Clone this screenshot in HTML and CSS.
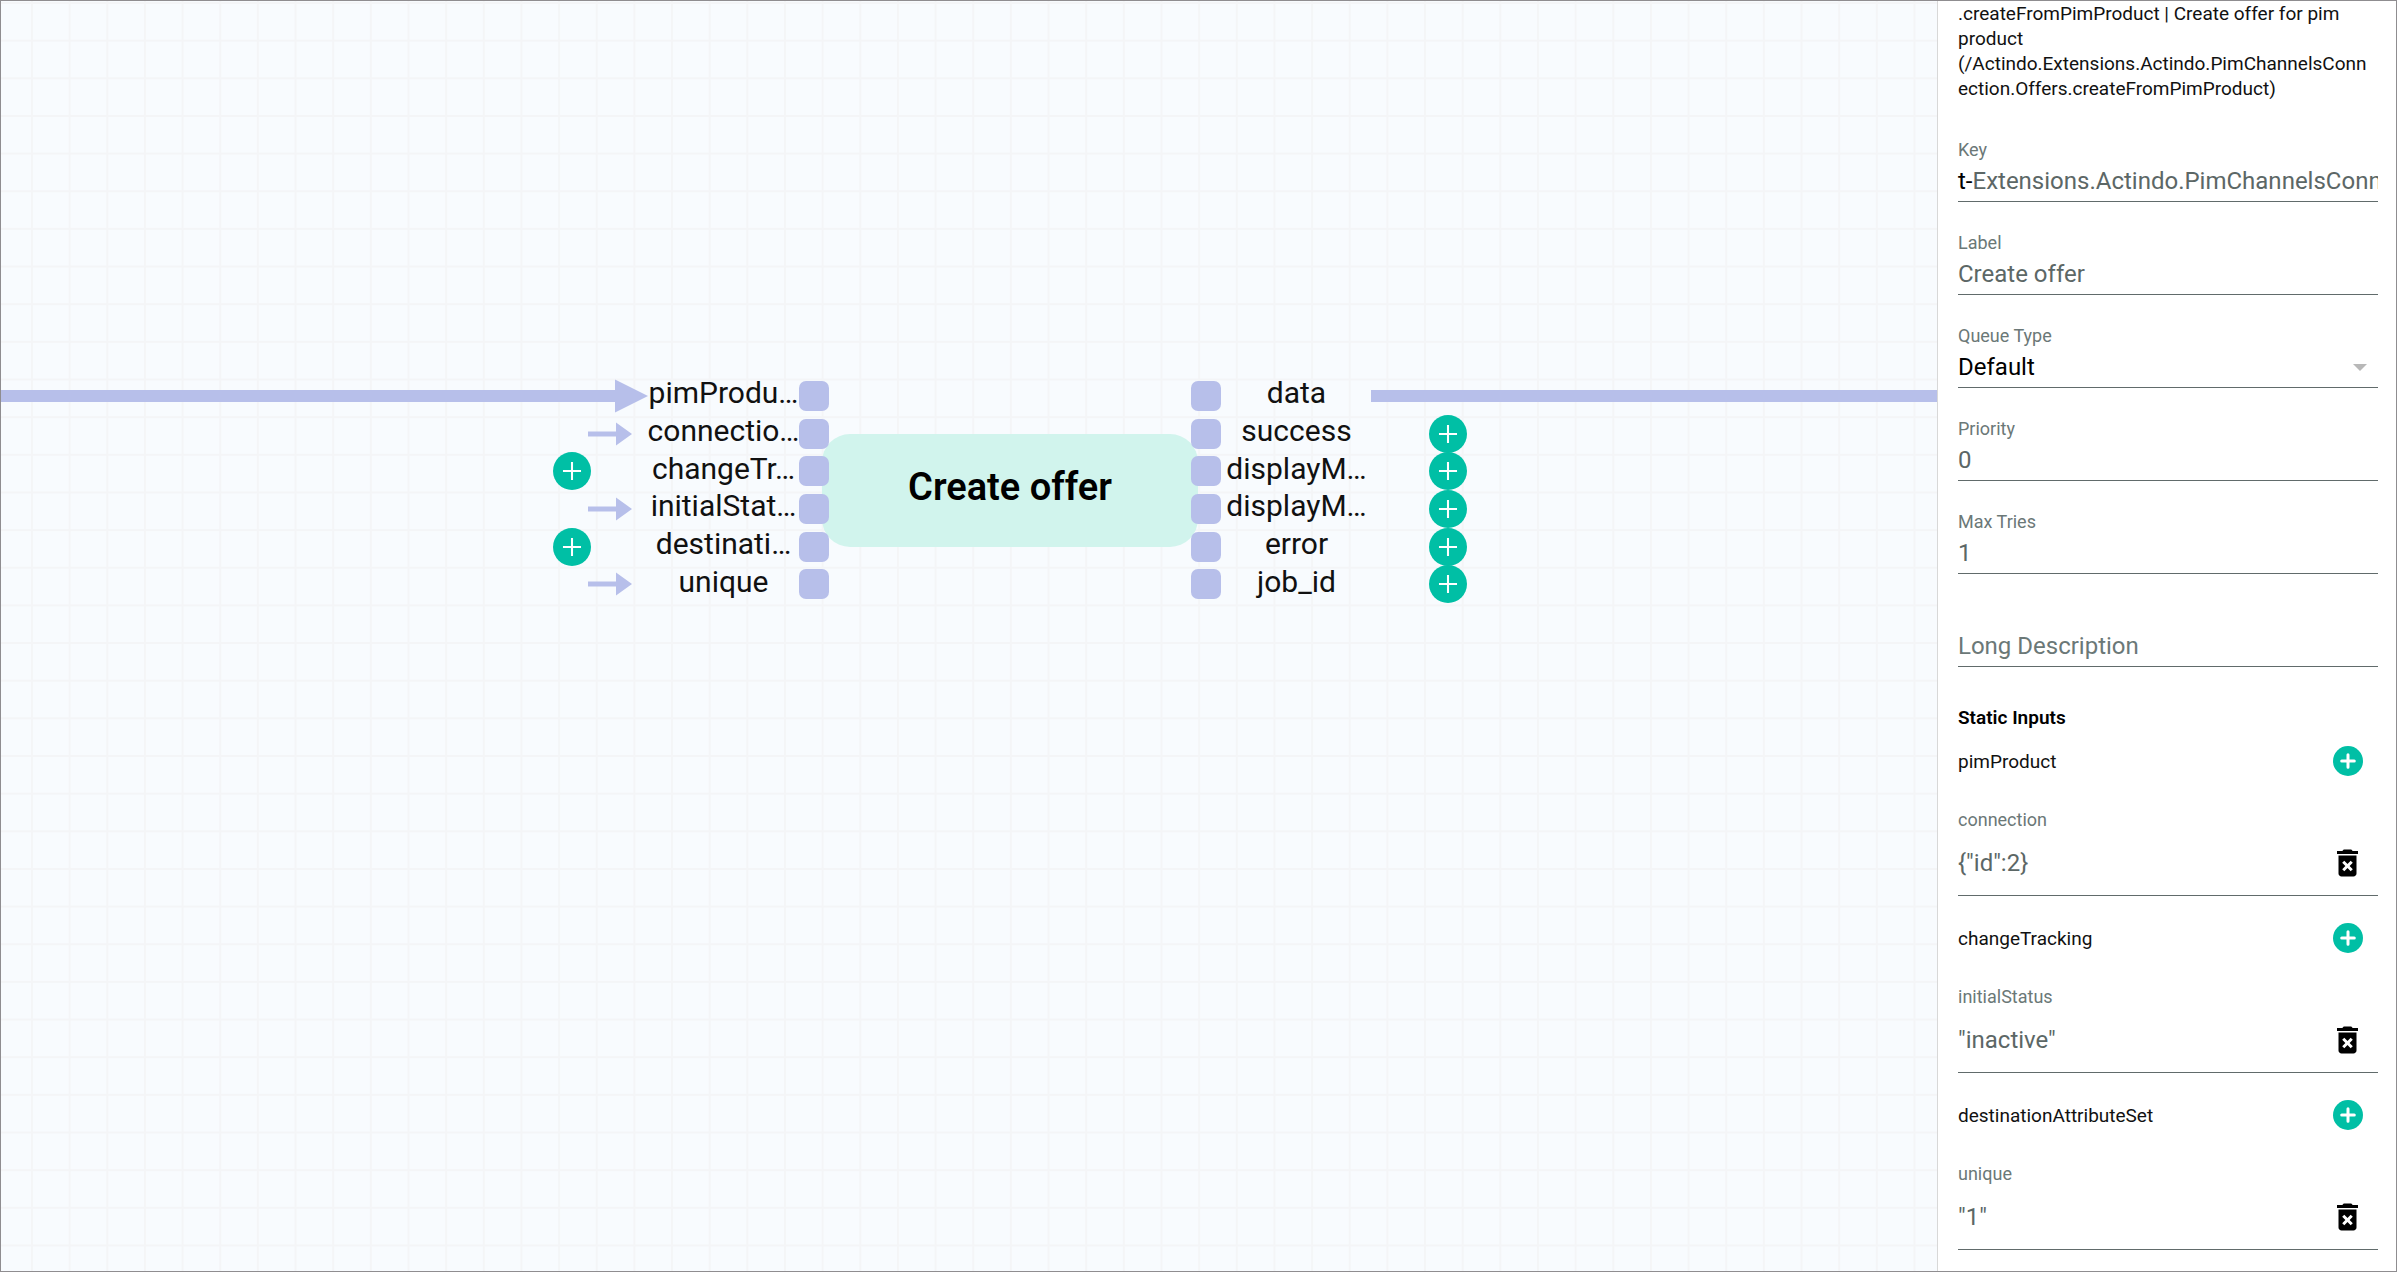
FILE: index.html
```html
<!DOCTYPE html>
<html lang="en">
<head>
<meta charset="utf-8">
<meta name="viewport" content="width=device-width, initial-scale=1">
<title>Create offer – workflow editor</title>
<link rel="stylesheet" href="styles.css">
</head>
<body>
<svg class="sprite" aria-hidden="true">
  <symbol id="plus" viewBox="0 0 24 24"><circle cx="12" cy="12" r="12" fill="#00bfa5"/><path d="M12 6.300v11.400M6.300 12h11.400" stroke="#fff" stroke-width="1.300"/></symbol>
  <symbol id="add" viewBox="2 2 20 20"><circle cx="12" cy="12" r="10" fill="#00bfa5"/><path d="M12 7.800v8.400M7.800 12h8.400" stroke="#fff" stroke-width="2" stroke-linecap="round"/></symbol>
  <symbol id="trash" viewBox="5 3 14 18"><path fill-rule="evenodd" d="M6 19c0 1.100.9 2 2 2h8c1.100 0 2-.9 2-2V7H6v12zm2.460-7.120 1.410-1.410L12 12.590l2.120-2.120 1.410 1.410L13.410 14l2.120 2.120-1.410 1.410L12 15.410l-2.120 2.120-1.410-1.410L10.590 14l-2.130-2.120zM15.500 4l-1-1h-5l-1 1H5v2h14V4z"/></symbol>
  <symbol id="arrow" viewBox="0 0 44 24"><path d="M0 9.500h28V.5L44 12 28 23.500v-9H0z" fill="#b7bfea"/></symbol>
  <symbol id="head" viewBox="0 0 33 34"><path d="M0 .5 33 17 0 33.500z" fill="#b7bfea"/></symbol>
</svg>
<div class="app">
  <main class="canvas">
    <svg class="grid" aria-hidden="true">
      <defs>
        <pattern id="cells" width="20" height="20" patternUnits="userSpaceOnUse" patternTransform="translate(30 1) scale(1.8825)">
          <path d="M0 0H20M0 0V20" stroke="#f4f5f7" stroke-width="2" fill="none"/>
        </pattern>
      </defs>
      <rect width="100%" height="100%" fill="url(#cells)"/>
    </svg>
    <div class="edge edge-in"><svg class="head"><use href="#head"/></svg></div>
    <div class="edge edge-out"></div>
    <section class="node" aria-label="Create offer">
      <ul class="links links-in">
        <li></li>
        <li><svg class="arrow"><use href="#arrow"/></svg></li>
        <li><button class="plus" aria-label="Connect changeTracking"><svg><use href="#plus"/></svg></button></li>
        <li><svg class="arrow"><use href="#arrow"/></svg></li>
        <li><button class="plus" aria-label="Connect destinationAttributeSet"><svg><use href="#plus"/></svg></button></li>
        <li><svg class="arrow"><use href="#arrow"/></svg></li>
      </ul>
      <ul class="labels">
        <li>pimProdu…</li><li>connectio…</li><li>changeTr…</li><li>initialStat…</li><li>destinati…</li><li>unique</li>
      </ul>
      <ul class="ports"><li></li><li></li><li></li><li></li><li></li><li></li></ul>
      <h1 class="box">Create offer</h1>
      <ul class="ports"><li></li><li></li><li></li><li></li><li></li><li></li></ul>
      <ul class="labels">
        <li>data</li><li>success</li><li>displayM…</li><li>displayM…</li><li>error</li><li>job_id</li>
      </ul>
      <ul class="links links-out">
        <li></li>
        <li><button class="plus" aria-label="Connect success"><svg><use href="#plus"/></svg></button></li>
        <li><button class="plus" aria-label="Connect displayMessage"><svg><use href="#plus"/></svg></button></li>
        <li><button class="plus" aria-label="Connect displayMessageTitle"><svg><use href="#plus"/></svg></button></li>
        <li><button class="plus" aria-label="Connect error"><svg><use href="#plus"/></svg></button></li>
        <li><button class="plus" aria-label="Connect job_id"><svg><use href="#plus"/></svg></button></li>
      </ul>
    </section>
  </main>
  <aside class="panel">
    <p class="about">.createFromPimProduct | Create offer for pim product (/Actindo.Extensions.Actindo.PimChannelsConn<wbr>ection.Offers.createFromPimProduct)</p>
    <div class="field">
      <label for="key">Key</label>
      <div class="control"><span>t-</span><input id="key" value="Extensions.Actindo.PimChannelsConnection.Offers"></div>
    </div>
    <div class="field">
      <label for="label">Label</label>
      <div class="control"><input id="label" value="Create offer"></div>
    </div>
    <div class="field">
      <label for="queue">Queue Type</label>
      <div class="control"><select id="queue"><option>Default</option></select><svg class="caret" viewBox="0 0 14 7" aria-hidden="true"><path d="M0 0h14L7 7z" fill="#b8b8b8"/></svg></div>
    </div>
    <div class="field">
      <label for="priority">Priority</label>
      <div class="control"><input id="priority" value="0"></div>
    </div>
    <div class="field">
      <label for="tries">Max Tries</label>
      <div class="control"><input id="tries" value="1"></div>
    </div>
    <div class="field field-empty">
      <div class="control"><input aria-label="Long Description" placeholder="Long Description"></div>
    </div>
    <h2>Static Inputs</h2>
    <div class="unset"><span>pimProduct</span><button aria-label="Add pimProduct"><svg><use href="#add"/></svg></button></div>
    <div class="static">
      <label for="connection">connection</label>
      <div class="control"><input id="connection" value="{&quot;id&quot;:2}"><button aria-label="Delete connection"><svg><use href="#trash"/></svg></button></div>
    </div>
    <div class="unset"><span>changeTracking</span><button aria-label="Add changeTracking"><svg><use href="#add"/></svg></button></div>
    <div class="static">
      <label for="status">initialStatus</label>
      <div class="control"><input id="status" value="&quot;inactive&quot;"><button aria-label="Delete initialStatus"><svg><use href="#trash"/></svg></button></div>
    </div>
    <div class="unset"><span>destinationAttributeSet</span><button aria-label="Add destinationAttributeSet"><svg><use href="#add"/></svg></button></div>
    <div class="static">
      <label for="unique">unique</label>
      <div class="control"><input id="unique" value="&quot;1&quot;"><button aria-label="Delete unique"><svg><use href="#trash"/></svg></button></div>
    </div>
  </aside>
</div>
</body>
</html>
```
FILE: styles.css
```css
* { box-sizing: border-box; }
body { margin: 0; font-family: Roboto, sans-serif; color: #111; }
ul, h1, h2, p { margin: 0; padding: 0; list-style: none; }
button { display: flex; padding: 0; border: 0; background: none; cursor: pointer; }
.sprite { display: none; }

.app { display: flex; height: 100vh; border: 1px solid #8f8d90; overflow: hidden; }

/* Workflow canvas */
.canvas { position: relative; flex: 1; min-width: 0; overflow: hidden; background: #f8fbfe; }
.grid { position: absolute; inset: 0; width: 100%; height: 100%; }
.edge { position: absolute; top: 389px; height: 12px; background: #b7bfea; }
.edge-in { left: 0; width: 614px; }
.edge-out { left: 1370px; right: 0; }
.head { position: absolute; left: 100%; top: -11px; width: 33px; height: 34px; }

.node { position: absolute; left: 552px; top: 376px; display: flex; align-items: center; }
.node ul { display: flex; flex-direction: column; height: 226px; }
.node li { flex: 1; min-height: 0; display: flex; align-items: center; }
.links-in { width: 95px; }
.links-out { width: 95px; align-items: flex-end; }
.arrow { width: 44px; height: 24px; margin-left: 35px; }
.plus svg { width: 38px; height: 38px; }
.labels { width: 151px; font-size: 30px; line-height: 32px; }
.node .labels li { justify-content: center; padding-bottom: 5px; white-space: nowrap; }
.ports { position: relative; width: 30px; }
.ports li::before { content: ""; width: 30px; height: 30px; border-radius: 7px; background: #b7bfea; }
.box { width: 376px; height: 113px; margin: 0 -7px; padding-bottom: 7px; display: flex; align-items: center; justify-content: center; border-radius: 28px; background: #d1f4ed; color: #000; font-size: 38px; font-weight: 600; }

/* Properties panel */
.panel { width: 459px; flex: none; padding: 0 18px 0 20px; border-left: 1px solid #d8d8d8; background: #fff; overflow: hidden; }
.about, .unset, h2 { font-size: 19px; line-height: 25px; }
.about { margin-bottom: 8px; overflow-wrap: anywhere; }
h2 { margin-top: 38px; color: #000; font-weight: 600; }
label { display: block; font-size: 18px; line-height: 22px; color: #6b7877; }
.control { position: relative; display: flex; align-items: center; padding: 6px 0; border-bottom: 1px solid #616b6b; font-size: 24px; line-height: 28px; color: #000; }
.control input, .control select { flex: 1; min-width: 0; height: 28px; padding: 0; border: 0; outline: 0; appearance: none; background: none; font: inherit; color: #5c6766; }
.control select { color: #000; }
.control ::placeholder { color: #6b7877; opacity: 1; }
.field { padding-top: 30px; }
.field-empty { padding-top: 52px; }
.caret { width: 14px; height: 7px; margin-right: 11px; }
.unset { display: flex; align-items: center; justify-content: space-between; margin-top: 27px; padding-right: 15px; }
h2 + .unset { margin-top: 16px; }
.unset svg { width: 30px; height: 30px; }
.static { padding-top: 33px; }
.static .control { padding: 18px 20px 18px 0; }
.static svg { width: 21px; height: 28px; }
```
